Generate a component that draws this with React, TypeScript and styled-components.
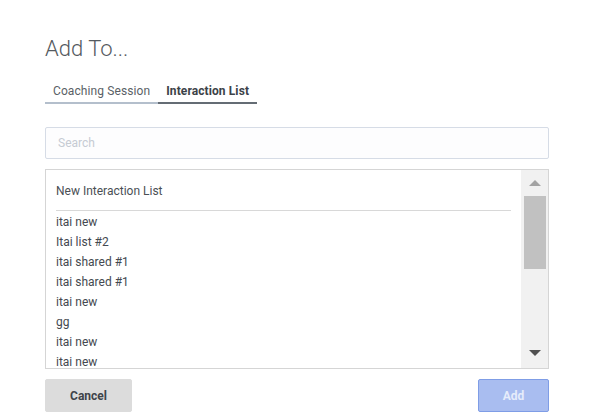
import { FC, useState } from 'react'
import styled, { createGlobalStyle } from 'styled-components'


const GlobalStyle = createGlobalStyle`
  html, body {
    margin: 0;
    padding: 0;
    background: #ffffff;
    font-family: Roboto, "Liberation Sans", Arial, sans-serif;
  }
  * {
    box-sizing: border-box;
  }
`

const Dialog = styled.div`
  width: 595px;
  height: 416px;
  padding: 36px 45px 0 45px;
  display: flex;
  flex-direction: column;
`

const Title = styled.h2`
  margin: 0;
  font-size: 22px;
  line-height: 26px;
  font-weight: 300;
  color: #555a60;
`

const Tabs = styled.div`
  display: flex;
  margin-top: 21px;
`

const Tab = styled.button<{ $active?: boolean }>`
  border: none;
  background: none;
  padding: 0 8px 3px;
  font-family: inherit;
  font-size: 12px;
  line-height: 16px;
  letter-spacing: 0.1px;
  font-weight: ${p => (p.$active ? 700 : 400)};
  color: ${p => (p.$active ? '#3c4248' : '#5a5f66')};
  border-bottom: 2px solid ${p => (p.$active ? '#646c74' : '#b4bfcc')};
  cursor: pointer;
`

const SearchInput = styled.input`
  margin-top: 23px;
  width: 504px;
  height: 32px;
  border: 1px solid #d6dce6;
  border-radius: 2px;
  padding: 0 12px;
  font-family: inherit;
  font-size: 12px;
  color: #444;
  background: #fdfdfe;
  outline: none;

  &::placeholder {
    color: #c6cbd3;
  }
`

const ListBox = styled.div`
  margin-top: 10px;
  width: 504px;
  height: 200px;
  border: 1px solid #d5d5d5;
  display: flex;
`

const ListBody = styled.div`
  flex: 1;
  overflow: hidden;
  padding: 0 10px;
`

const NewItem = styled.div`
  height: 41px;
  padding-top: 1px;
  line-height: 40px;
  font-size: 12px;
  color: #4a4f55;
  border-bottom: 1px solid #d8d8d8;
`

const Items = styled.div`
  padding-top: 1px;
`

const Item = styled.div`
  line-height: 20px;
  font-size: 12px;
  color: #444950;
  cursor: pointer;
`

const Scrollbar = styled.div`
  width: 27px;
  background: #f1f1f1;
  display: flex;
  flex-direction: column;
  align-items: center;
  padding: 10px 0 12px;
`

const Arrow = styled.div<{ $down?: boolean; $dim?: boolean }>`
  width: 0;
  height: 0;
  border-left: 6px solid transparent;
  border-right: 6px solid transparent;
  ${p =>
    p.$down
      ? `border-top: 6px solid ${p.$dim ? '#a3a3a3' : '#505050'};`
      : `border-bottom: 6px solid ${p.$dim ? '#a3a3a3' : '#505050'};`}
`

const Thumb = styled.div`
  margin-top: 10px;
  width: 22px;
  height: 73px;
  background: #c1c1c1;
`

const Spacer = styled.div`
  flex: 1;
`

const Footer = styled.div`
  margin-top: 10px;
  display: flex;
  justify-content: space-between;
  width: 504px;
`

const Button = styled.button<{ $primary?: boolean }>`
  height: 33px;
  padding: 0;
  width: ${p => (p.$primary ? '71px' : '87px')};
  border-radius: 2px;
  font-family: inherit;
  font-size: 12px;
  line-height: 16px;
  font-weight: 700;
  border: 1px solid ${p => (p.$primary ? '#7f9de6' : '#dcdcdc')};
  background: ${p => (p.$primary ? '#a9bdf0' : '#dcdcdc')};
  color: ${p => (p.$primary ? '#e6ecfb' : '#3f444a')};
  cursor: pointer;
`


const lists = [
  'itai new',
  'Itai list #2',
  'itai shared #1',
  'itai shared #1',
  'itai new',
  'gg',
  'itai new',
  'itai new',
  'itai new',
  'test list',
]


const App: FC = () => {
  const [tab, setTab] = useState(1)

  return (
    <>
      <GlobalStyle />
      <Dialog>
        <Title>Add To...</Title>

        <Tabs>
          <Tab $active={tab === 0} onClick={() => setTab(0)}>Coaching Session</Tab>
          <Tab $active={tab === 1} onClick={() => setTab(1)}>Interaction List</Tab>
        </Tabs>

        <SearchInput placeholder="Search" />

        <ListBox>
          <ListBody>
            <NewItem>New Interaction List</NewItem>
            <Items>
              {lists.map((name, i) => (
                <Item key={i}>{name}</Item>
              ))}
            </Items>
          </ListBody>
          <Scrollbar>
            <Arrow $dim />
            <Thumb />
            <Spacer />
            <Arrow $down />
          </Scrollbar>
        </ListBox>

        <Footer>
          <Button>Cancel</Button>
          <Button $primary>Add</Button>
        </Footer>
      </Dialog>
    </>
  )
}


export default App
